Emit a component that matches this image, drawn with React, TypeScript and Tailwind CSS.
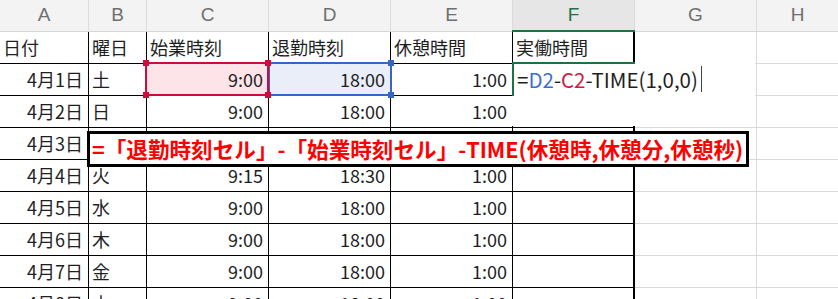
import React from "react";

const COLS = "grid grid-cols-[89px_58px_122px_122px_122px_122px_122px_1fr]";
const BODY_FONT = { fontFamily: '"Noto Sans CJK JP", "Noto Sans", sans-serif' };

type Row = [string, string, string, string, string];

const rows: Row[] = [
  ["4月1日", "土", "9:00", "18:00", "1:00"],
  ["4月2日", "日", "9:00", "18:00", "1:00"],
  ["4月3日", "月", "9:00", "18:00", "1:00"],
  ["4月4日", "火", "9:15", "18:30", "1:00"],
  ["4月5日", "水", "9:00", "18:00", "1:00"],
  ["4月6日", "木", "9:00", "18:00", "1:00"],
  ["4月7日", "金", "9:00", "18:00", "1:00"],
  ["4月8日", "土", "9:00", "18:00", "1:00"],
];

const letters = ["A", "B", "C", "D", "E", "F", "G", "H"];

function Handle({ x, y, color }: { x: number; y: number; color: string }) {
  return (
    <div
      className={`absolute w-[6px] h-[6px] ${color}`}
      style={{ left: x - 3, top: y - 3 }}
    />
  );
}

export default function App() {
  return (
    <div
      className="relative w-[838px] h-[299px] overflow-hidden bg-white text-[18px] text-[#1f1f1f]"
      style={BODY_FONT}
    >
      {/* column letters */}
      <div className={`${COLS} h-[32px] bg-[#f3f3f3] border-b border-[#d6d6d6]`}>
        {letters.map((l, i) => (
          <div
            key={l}
            className={`flex items-center justify-center text-[19px] ${
              i < 7 ? "border-r border-[#dcdcdc]" : ""
            } ${l === "F" ? "bg-[#e6e6e6] text-[#1e7145]" : "text-[#6f6f6f]"}`}
            style={{ fontFamily: '"Liberation Sans", Arial, sans-serif' }}
          >
            {l}
          </div>
        ))}
      </div>

      {/* title row */}
      <div className={`${COLS} h-[32px]`}>
        {["日付", "曜日", "始業時刻", "退勤時刻", "休憩時間"].map((t) => (
          <div key={t} className="flex items-center pl-[3px] border-r border-b border-black">
            {t}
          </div>
        ))}
        <div className="flex items-center pl-[3px] border-r-2 border-b border-black">実働時間</div>
        <div className="border-r border-b border-[#d9d9d9]" />
        <div className="border-b border-[#d9d9d9]" />
      </div>

      {/* data rows */}
      {rows.map((r, i) => (
        <div key={r[0]} className={`${COLS} h-[32px]`}>
          <div className="flex items-center justify-end pr-[5px] border-r border-b border-black">{r[0]}</div>
          <div className="flex items-center pl-[3px] border-r border-b border-black">{r[1]}</div>
          <div
            className={`flex items-center justify-end pr-[5px] border-r border-b border-black ${
              i === 0 ? "bg-[#fce4e9]" : ""
            }`}
          >
            {r[2]}
          </div>
          <div
            className={`flex items-center justify-end pr-[5px] border-r border-b border-black ${
              i === 0 ? "bg-[#e9eef9]" : ""
            }`}
          >
            {r[3]}
          </div>
          <div className="flex items-center justify-end pr-[5px] border-r border-b border-black">{r[4]}</div>
          <div className="border-r-2 border-b border-black" />
          <div className="border-r border-b border-[#d9d9d9]" />
          <div className="border-b border-[#d9d9d9]" />
        </div>
      ))}

      {/* active column marker under the F letter */}
      <div className="absolute left-[512px] top-[30px] w-[123px] h-[2px] bg-[#1e7145]" />

      {/* in-cell editor for F2 */}
      <div className="absolute left-[512px] top-[62px] w-[243px] h-[64px] bg-white">
        <div className="flex items-center h-[34px] pl-[5px] whitespace-nowrap text-[20.5px]">
          <span>=</span>
          <span className="text-[#3d6fd1]">D2</span>
          <span>-</span>
          <span className="text-[#d6163f]">C2</span>
          <span>-TIME(1,0,0)</span>
          <span className="ml-[3px] w-px h-[26px] bg-[#444]" />
        </div>
      </div>
      <div className="absolute left-[512px] top-[62px] w-[123px] h-[2px] bg-[#1e7145]" />
      <div className="absolute left-[512px] top-[62px] w-[2px] h-[34px] bg-[#1e7145]" />

      {/* reference highlight D2 */}
      <div className="absolute left-[268px] top-[62px] w-[124px] h-[34px] border-2 border-[#3466c8]" />
      <Handle x={391} y={63} color="bg-[#3466c8]" />
      <Handle x={391} y={95} color="bg-[#3466c8]" />

      {/* reference highlight C2 */}
      <div className="absolute left-[145px] top-[62px] w-[124px] h-[34px] border-2 border-[#d10a3c]" />
      <Handle x={146} y={63} color="bg-[#d10a3c]" />
      <Handle x={268} y={63} color="bg-[#d10a3c]" />
      <Handle x={146} y={95} color="bg-[#d10a3c]" />
      <Handle x={268} y={95} color="bg-[#d10a3c]" />

      {/* formula explanation callout */}
      <div className="absolute left-[87px] top-[131px] w-[662px] h-[36px] bg-white border-[3px] border-black flex items-center pl-[2px] whitespace-nowrap">
        <span className="text-[21.6px] font-bold text-[#ff0000] leading-none">
          =「退勤時刻セル」-「始業時刻セル」-TIME(休憩時,休憩分,休憩秒)
        </span>
      </div>
    </div>
  );
}
